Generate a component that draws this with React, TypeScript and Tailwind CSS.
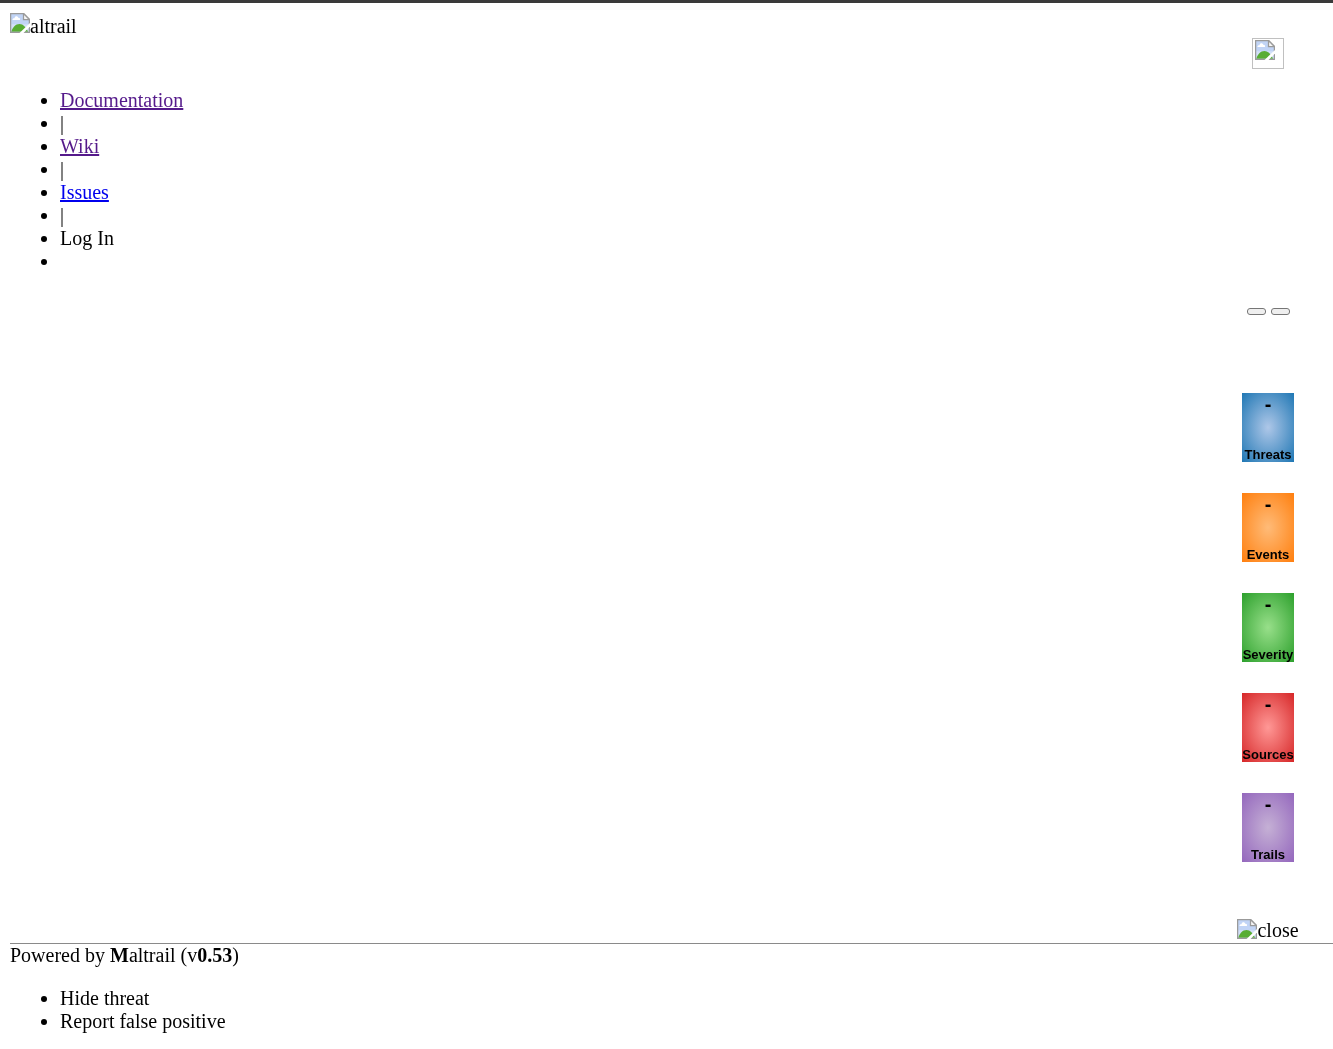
import React from 'react';

interface ImageIconProps {
  className?: string;
}

const ImageIcon: React.FC<ImageIconProps> = ({ className = '' }) => (
  <svg viewBox="0 0 16 16" className={`w-5 h-5 shrink-0 ${className}`} aria-hidden="true">
    <path d="M0.5 0.5H11L15.5 5V15.5H0.5Z" fill="#c1d4f6" />
    <path d="M1 9H15V15H1Z" fill="#d3e0f8" />
    <path d="M2 5.6C1.8 4.4 3 4 3.6 4.2C3.9 2.2 6.2 2.2 6.7 3.9C7.9 3.7 8.3 4.8 7.9 5.6Z" fill="#fff" />
    <path d="M1 15C2 11.6 4.4 8.8 7.6 8.8C10.6 8.8 12.6 11.4 14.6 15Z" fill="#58ad34" />
    <path d="M0.5 15.5V0.5H11L15.5 5V15.5Z" fill="none" stroke="#9a9a9a" />
    <path d="M10.8 0.5V5.2H15.5Z" fill="#f6f6f6" stroke="#9a9a9a" />
    <path d="M7.6 16L16 8V10.8L10.8 16Z" fill="#fff" />
  </svg>
);

const links = [
  { label: 'Documentation', className: 'text-[#551a8b]' },
  { label: 'Wiki', className: 'text-[#551a8b]' },
  { label: 'Issues', className: 'text-[#0000ee]' },
];

const stats = [
  { label: 'Threats', className: 'bg-[radial-gradient(#aec7e8,#1f77b4)]' },
  { label: 'Events', className: 'bg-[radial-gradient(#ffbb78,#ff7f0e)]' },
  { label: 'Severity', className: 'bg-[radial-gradient(#98df8a,#2ca02c)]' },
  { label: 'Sources', className: 'bg-[radial-gradient(#ff9896,#d62728)]' },
  { label: 'Trails', className: 'bg-[radial-gradient(#c5b0d5,#9467bd)]' },
];

const App: React.FC = () => {
  return (
    <div className="min-h-screen antialiased will-change-transform border-t-[3px] border-[#3a3a3a] pl-[10px] text-black text-[20px] leading-[23px] font-['Liberation_Serif',serif]">
      {/* Header */}
      <header className="pt-[10px]">
        <div className="flex items-start h-[25px]">
          <ImageIcon />
          <span className="pt-[2px]">altrail</span>
        </div>
        <div className="flex justify-end">
          <div className="w-[130px] flex justify-center">
            <div className="w-8 h-[31px] border border-[#c0c0c0] pl-[2px] pt-px">
              <ImageIcon />
            </div>
          </div>
        </div>
        <nav className="mt-5">
          <ul className="list-disc pl-[50px]">
            {links.map((link) => (
              <React.Fragment key={link.label}>
                <li><a href="#" className={`underline ${link.className}`}>{link.label}</a></li>
                <li>|</li>
              </React.Fragment>
            ))}
            <li>Log In</li>
            <li className="h-[23px]"></li>
          </ul>
        </nav>
      </header>

      {/* Stats column */}
      <main className="flex justify-end">
        <div className="w-[130px] flex flex-col items-center">
          <div className="flex gap-[5px] mt-[35px]">
            <button aria-label="Previous" className="w-[19px] h-[7px] rounded-[3px] border border-[#767676] bg-[#efefef]" />
            <button aria-label="Next" className="w-[19px] h-[7px] rounded-[3px] border border-[#767676] bg-[#efefef]" />
          </div>

          <ul className="mt-[78px] flex flex-col gap-[31px] font-['Liberation_Sans',sans-serif] font-bold">
            {stats.map((stat) => (
              <li key={stat.label} className={`w-[52px] h-[69px] flex flex-col items-center justify-between ${stat.className}`}>
                <span>-</span>
                <span className="text-[13px] leading-[15px]">{stat.label}</span>
              </li>
            ))}
          </ul>

          <div className="mt-[57px] flex items-start h-6">
            <ImageIcon />
            <span>close</span>
          </div>
        </div>
      </main>

      {/* Footer */}
      <footer className="border-t border-[#8a8a8a] pb-4">
        <p>Powered by <b>M</b>altrail (v<b>0.53</b>)</p>
        <ul className="list-disc pl-[50px] mt-5">
          <li>Hide threat</li>
          <li>Report false positive</li>
        </ul>
      </footer>
    </div>
  );
};

export default App;
